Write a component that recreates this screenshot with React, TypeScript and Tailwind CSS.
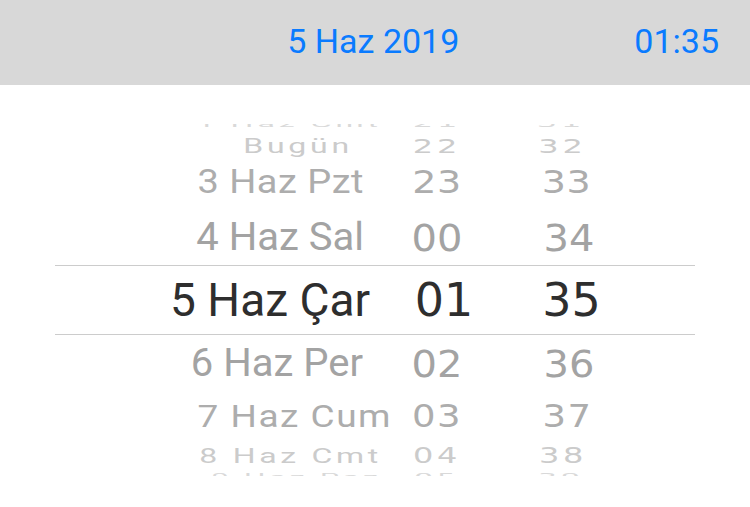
import React from 'react';

type Row = {
  date: string;
  hour: string;
  min: string;
  h: string;
  txt: string;
  datePad: string;
  hourPad: string;
  minPad: string;
};

// wheel rows, squeezed toward the edges like the iOS picker
const rows: Row[] = [
  { date: '1 Haz Cmt', hour: '21', min: '31', h: 'h-[29px]', txt: 'text-[32px] scale-y-[0.3] tracking-[4px] text-[#d9d9d9]', datePad: 'pr-[13px]', hourPad: '', minPad: 'pr-[16px]' },
  { date: 'Bugün', hour: '22', min: '32', h: 'h-[15px]', txt: 'text-[32px] scale-y-[0.62] tracking-[3.8px] text-[#cbcbcb]', datePad: 'pr-[42px]', hourPad: '', minPad: 'pr-[13px]' },
  { date: '3 Haz Pzt', hour: '23', min: '33', h: 'h-[58px]', txt: 'text-[38px] scale-y-[0.85] tracking-[0.5px] text-[#adadad]', datePad: 'pr-[31px]', hourPad: '', minPad: 'pr-[5px]' },
  { date: '4 Haz Sal', hour: '00', min: '34', h: 'h-[54px]', txt: 'text-[40px] scale-y-[0.95] text-[#a3a3a3]', datePad: 'pr-[31px]', hourPad: '', minPad: '' },
];

const after: Row[] = [
  { date: '6 Haz Per', hour: '02', min: '36', h: 'h-[58px]', txt: 'text-[40px] scale-y-[0.95] text-[#a3a3a3]', datePad: 'pr-[32px]', hourPad: '', minPad: '' },
  { date: '7 Haz Cum', hour: '03', min: '37', h: 'h-[47px]', txt: 'text-[37px] scale-y-[0.84] tracking-[1.5px] text-[#adadad]', datePad: 'pr-[3px]', hourPad: '', minPad: 'pr-[3px]' },
  { date: '8 Haz Cmt', hour: '04', min: '38', h: 'h-[32px]', txt: 'text-[32px] scale-y-[0.66] tracking-[3.7px] text-[#cbcbcb]', datePad: 'pr-[13px]', hourPad: '', minPad: 'pr-[12px]' },
  { date: '9 Haz Paz', hour: '05', min: '39', h: 'h-[9px]', txt: 'text-[30px] scale-y-[0.35] tracking-[4px] text-[#d9d9d9]', datePad: 'pr-[13px]', hourPad: '', minPad: 'pr-[16px]' },
];

function WheelRow({ r }: { r: Row }) {
  return (
    <div className={`${r.h} mx-[55px] flex items-center`}>
      <div className={`w-[340px] shrink-0 flex justify-end ${r.datePad}`}>
        <span className={`inline-block leading-none whitespace-nowrap font-['Roboto',sans-serif] ${r.txt}`}>{r.date}</span>
      </div>
      <div className={`w-[84px] shrink-0 flex justify-center ${r.hourPad}`}>
        <span className={`inline-block leading-none font-['DejaVu_Sans',sans-serif] ${r.txt}`}>{r.hour}</span>
      </div>
      <div className={`w-[180px] shrink-0 flex justify-center ${r.minPad}`}>
        <span className={`inline-block leading-none font-['DejaVu_Sans',sans-serif] ${r.txt}`}>{r.min}</span>
      </div>
    </div>
  );
}

export default function App() {
  return (
    <div className="w-[750px] h-[507px] bg-white overflow-hidden font-['Roboto',sans-serif]">
      <div className="h-[85px] bg-[#d8d8d8] flex items-center justify-end pr-[31px] pb-[3px] gap-[175px] text-[34px] leading-none text-[#0a7bff]">
        <span>5 Haz 2019</span>
        <span>01:35</span>
      </div>

      <div className="mt-[39px] h-[352px] overflow-hidden">
        <div className="-mt-[15px] flex flex-col">
          {rows.map((r) => (
            <WheelRow key={r.date} r={r} />
          ))}

          <div className="h-[70px] mx-[55px] border-y border-[#cccccc] flex items-center">
            <div className="w-[340px] shrink-0 flex justify-end pr-[25px]">
              <span className="inline-block leading-none whitespace-nowrap text-[46px] text-[#2e2e2e]">5 Haz Çar</span>
            </div>
            <div className="w-[84px] shrink-0 flex justify-center pl-[14px]">
              <span className="inline-block leading-none font-['DejaVu_Sans',sans-serif] text-[46px] text-[#2e2e2e]">01</span>
            </div>
            <div className="w-[180px] shrink-0 flex justify-center pl-[5px]">
              <span className="inline-block leading-none font-['DejaVu_Sans',sans-serif] text-[46px] text-[#2e2e2e]">35</span>
            </div>
          </div>

          {after.map((r) => (
            <WheelRow key={r.date} r={r} />
          ))}
        </div>
      </div>
    </div>
  );
}
